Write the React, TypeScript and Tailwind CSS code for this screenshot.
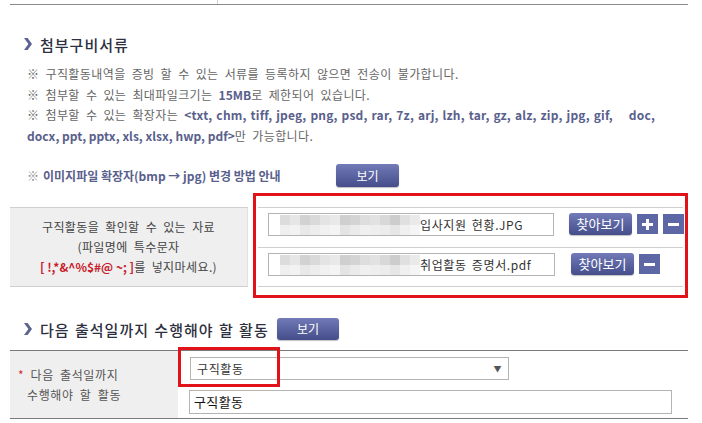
import React from 'react'

const FONT = { fontFamily: '"Noto Sans CJK KR", "Noto Sans", sans-serif' }

// mosaic stand-in for the blurred file path
const MOSAIC = [
  ['#dcdcdc', '#e6e6e6', '#d2d2d2', '#dadada', '#e4e4e4', '#e9e9e9', '#cfcfcf', '#d4d4d4', '#dedede', '#e2e2e2', '#d8d8d8', '#cdcdcd', '#e0e0e0', '#eaeaea'],
  ['#efefef', '#f2f2f2', '#e8e8e8', '#ededed', '#f1f1f1', '#f4f4f4', '#e4e4e4', '#ebebeb', '#f0f0f0', '#eeeeee', '#ececec', '#e6e6e6', '#f0f0f0', '#f5f5f5'],
]

function Mosaic() {
  return (
    <div className="flex flex-col shrink-0">
      {MOSAIC.map((row, i) => (
        <div key={i} className="flex">
          {row.map((c, j) => (
            <div key={j} className="w-[10px] h-[10px]" style={{ background: c }} />
          ))}
        </div>
      ))}
    </div>
  )
}

function Chevron() {
  return (
    <svg width="8" height="12" viewBox="0 0 8 12" className="shrink-0">
      <polygon points="0,0 3.6,0 8,6 3.6,12 0,12 4.4,6" fill="#5c6390" />
    </svg>
  )
}

function BlueButton({ children, className = '' }: { children: React.ReactNode; className?: string }) {
  return (
    <button
      className={`flex items-center justify-center rounded-[3px] bg-gradient-to-b from-[#727bb8] to-[#454e8b] text-white shadow-[0_1px_1px_rgba(0,0,0,0.25)] ${className}`}
    >
      {children}
    </button>
  )
}

function SquareButton({ sign }: { sign: '+' | '-' }) {
  return (
    <button className="w-[21px] h-[20px] bg-[#5d67a6] flex items-center justify-center shrink-0">
      <svg width="11" height="11" viewBox="0 0 11 11">
        <rect x="0" y="4" width="11" height="3" fill="#fff" />
        {sign === '+' && <rect x="4" y="0" width="3" height="11" fill="#fff" />}
      </svg>
    </button>
  )
}

function FileRow({ name, inputW, border }: { name: string; inputW: string; border?: boolean }) {
  return (
    <div className={`h-[39px] flex items-start pt-[5px] pl-[10px] ${border ? 'border-t border-[#cfcfcf]' : ''}`}>
      <div className={`${inputW} h-[23px] border border-[#b4b4b4] bg-white flex items-center pl-[11px] shrink-0`}>
        <Mosaic />
        <span className="text-[12px] tracking-[0.6px] [word-spacing:2px] text-[#333] leading-none whitespace-nowrap">{name}</span>
      </div>
    </div>
  )
}

export default function App() {
  return (
    <div className="w-[702px] h-[423px] bg-white overflow-hidden px-[10px] text-[#666]" style={FONT}>
      {/* top table fragment */}
      <div className="w-[678px] flex h-[5px] border-b border-[#8a8a8a]">
        <div className="w-[208px] border-r border-[#d0d0d0]" />
      </div>

      {/* 첨부구비서류 */}
      <div className="mt-[29px] pl-[14px] flex items-center gap-[8px] h-[20px]">
        <Chevron />
        <h2 className="text-[15px] font-medium text-[#2d3040] leading-none tracking-[1px]">첨부구비서류</h2>
      </div>

      <div className="mt-[10px] pl-[17px] text-[12px] leading-[20.5px] text-[#666] tracking-[0.4px] [word-spacing:3px]">
        <p>※ 구직활동내역을 증빙 할 수 있는 서류를 등록하지 않으면 전송이 불가합니다.</p>
        <p>
          ※ 첨부할 수 있는 최대파일크기는 <b className="text-[#59608c] tracking-[0px]">15MB</b>로 제한되어 있습니다.
        </p>
        <p className="whitespace-nowrap">
          ※ 첨부할 수 있는 확장자는{' '}
          <b className="text-[#59608c] tracking-[0.2px] [word-spacing:1px]">
            &lt;txt, chm, tiff, jpeg, png, psd, rar, 7z, arj, lzh, tar, gz, alz, zip, jpg, gif,
            <span className="inline-block w-[16px]" />
            doc,
          </b>
        </p>
        <p>
          <b className="text-[#59608c] tracking-[0px] [word-spacing:0px]">docx, ppt, pptx, xls, xlsx, hwp, pdf&gt;</b>만 가능합니다.
        </p>
      </div>

      <div className="mt-[18px] pl-[17px] flex items-center h-[23px]">
        <span className="text-[12px] text-[#888]">※</span>
        <b className="ml-[4px] text-[12px] text-[#59608c] w-[283px]">이미지파일 확장자(bmp → jpg) 변경 방법 안내</b>
        <BlueButton className="ml-[10px] w-[63px] h-[23px] text-[12px]">보기</BlueButton>
      </div>

      {/* 첨부 자료 table */}
      <div className="mt-[20px] w-[678px] flex">
        <div className="w-[238px] bg-[#efefef] border-y border-[#cfcfcf] border-r border-r-[#e2e2e2] flex flex-col items-center justify-center text-[12px] leading-[20px] text-[#444] tracking-[0.4px] [word-spacing:3px]">
          <p>구직활동을 확인할 수 있는 자료</p>
          <p>(파일명에 특수문자</p>
          <p>
            <b className="text-[#c8202a] tracking-[0px] [word-spacing:0px]">[ !,*&amp;^%$#@ ~; ]</b>를 넣지마세요.)
          </p>
        </div>
        <div className="relative flex-1 pl-[10px] pr-[5px]">
          <div className="border-y border-[#cfcfcf]">
            <FileRow name="입사지원 현황.JPG" inputW="w-[286px]" />
            <div className="absolute left-[321px] top-[6px] flex gap-[5px]">
              <BlueButton className="w-[63px] h-[22px] text-[13px]">찾아보기</BlueButton>
              <div className="flex gap-[5px] pt-[1px]">
                <SquareButton sign="+" />
                <SquareButton sign="-" />
              </div>
            </div>
            <FileRow name="취업활동 증명서.pdf" inputW="w-[287px]" border />
            <div className="absolute left-[323px] top-[46px] flex gap-[5px]">
              <BlueButton className="w-[63px] h-[22px] text-[13px]">찾아보기</BlueButton>
              <div className="pt-[1px]">
                <SquareButton sign="-" />
              </div>
            </div>
          </div>
          <div className="absolute left-[5px] right-0 top-[-14px] bottom-[-11px] border-[3px] border-[#e2121b] pointer-events-none" />
        </div>
      </div>

      {/* 다음 출석일까지 */}
      <div className="mt-[31px] pl-[14px] flex items-center gap-[8px] h-[22px]">
        <Chevron />
        <h2 className="w-[229px] text-[15px] font-medium text-[#2d3040] leading-none tracking-[1px] [word-spacing:1px] whitespace-nowrap">
          다음 출석일까지 수행해야 할 활동
        </h2>
        <BlueButton className="w-[62px] h-[22px] text-[12px]">보기</BlueButton>
      </div>

      <div className="mt-[10px] w-[678px] flex border-y border-[#7a7a7a]">
        <div className="w-[168px] bg-[#efefef] flex flex-col justify-center pl-[8px] text-[12px] leading-[20px] text-[#555] tracking-[0.6px] [word-spacing:3px]">
          <p>
            <span className="text-[#d0303a]">*</span> 다음 출석일까지
          </p>
          <p className="pl-[9px]">수행해야 할 활동</p>
        </div>
        <div className="relative flex-1 pl-[11px] pr-[16px] pt-[6px] pb-[4px]">
          <div className="ml-[1px] w-[319px] h-[23px] border border-[#b4b4b4] flex items-center justify-between pl-[6px] pr-[6px] text-[12px] text-[#333] tracking-[0.6px]">
            <span>구직활동</span>
            <span className="text-[8px] text-[#555]">▼</span>
          </div>
          <div className="mt-[10px] w-[483px] h-[24px] border border-[#b4b4b4] flex items-center pl-[4px] text-[13px] text-[#111] tracking-[0.4px]">
            구직활동
          </div>
          <div className="absolute left-0 top-[-4px] w-[102px] h-[40px] border-[3px] border-[#e2121b] pointer-events-none" />
        </div>
      </div>
    </div>
  )
}
